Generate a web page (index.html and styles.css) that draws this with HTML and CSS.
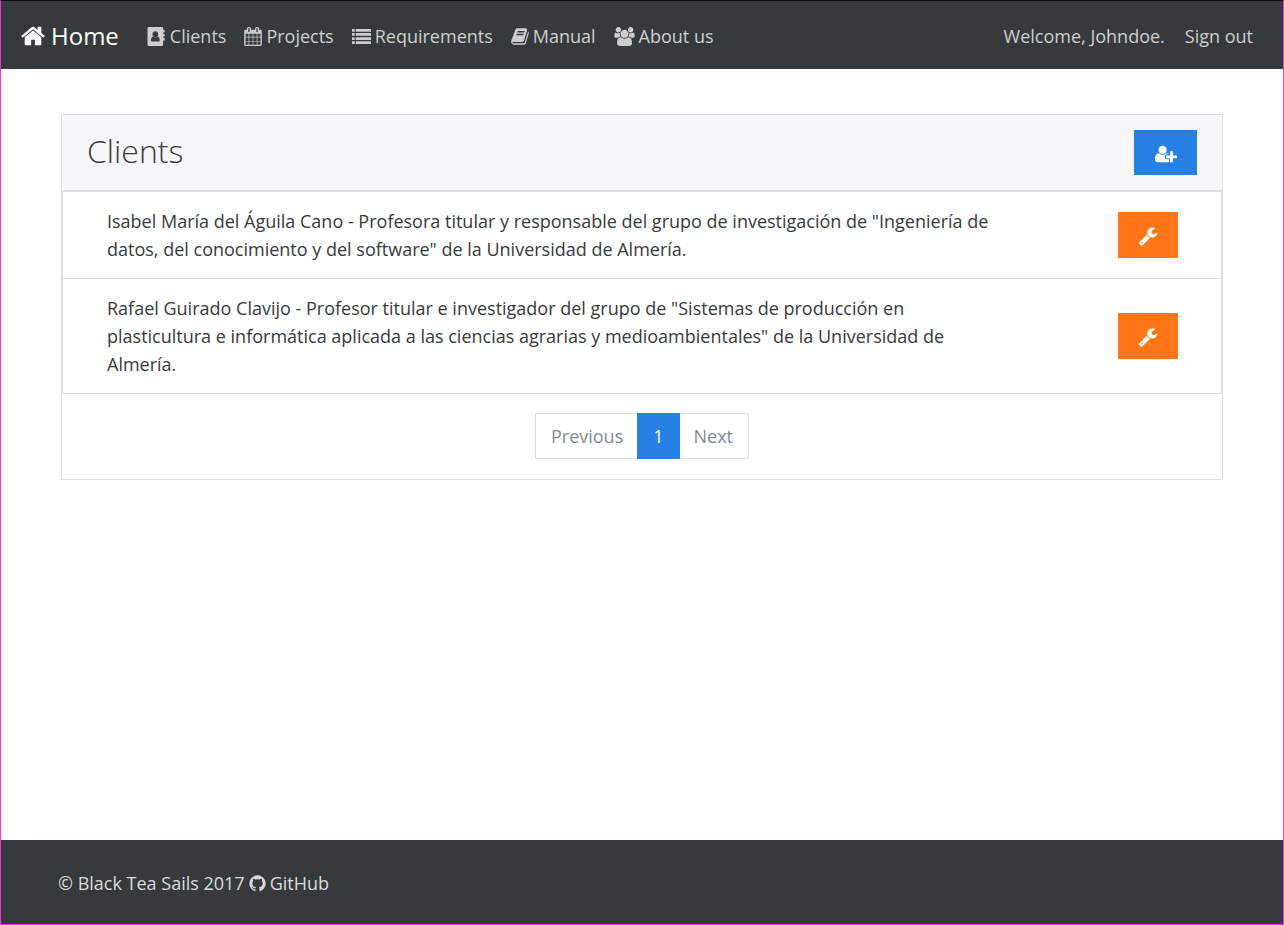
FILE: index.html
```html
<!DOCTYPE html>
<html lang="en">
<head>
<meta charset="utf-8">
<meta name="viewport" content="width=device-width, initial-scale=1">
<title>Clients</title>
<link rel="stylesheet" href="styles.css">
</head>
<body>
<header class="navbar">
  <a class="brand" href="#"><svg class="icon icon-home" viewBox="64 0 1664 1792" aria-hidden="true"><path d="M1472 992v480q0 26-19 45t-45 19h-384v-384h-256v384h-384q-26 0-45-19t-19-45v-480q0-1 .5-3t.5-3l575-474 575 474q1 2 1 6zm223-69l-62 74q-8 9-21 11h-3q-13 0-21-7l-692-577-692 577q-12 8-24 7-13-2-21-11l-62-74q-8-10-7-23.500t11-21.500l719-599q32-26 76-26t76 26l244 204v-195q0-14 9-23t23-9h192q14 0 23 9t9 23v408l219 182q10 8 11 21.500t-7 23.500z"/></svg>Home</a>
  <nav class="links">
    <a href="#"><svg class="icon" viewBox="0 0 1792 1792" aria-hidden="true"><path fill-rule="evenodd" d="M160 0h1250q110 0 110 110v146h80q64 0 64 64v128q0 64-64 64h-80v128h80q64 0 64 64v128q0 64-64 64h-80v128h80q64 0 64 64v128q0 64-64 64h-80v402q0 110-110 110H160Q50 1792 50 1682V110Q50 0 160 0zM785 400q-110 0-188 78t-78 200 78 202 188 80 188-80 78-202-78-200-188-78zM570 900q-110 20-155 130t-45 220q0 110 100 110h630q100 0 100-110 0-110-45-220t-155-130q-90 100-215 100T570 900z"/></svg>Clients</a>
    <a href="#"><svg class="icon icon-narrow" viewBox="64 0 1664 1792" aria-hidden="true"><path d="M192 1664h288v-288h-288v288zm352 0h320v-288h-320v288zm-352-352h288v-320h-288v320zm352 0h320v-320h-320v320zm-352-384h288v-288h-288v288zm736 736h320v-288h-320v288zm-384-736h320v-288h-320v288zm768 736h288v-288h-288v288zm-384-352h320v-320h-320v320zm-352-864v-288q0-13-9.500-22.500t-22.500-9.500h-64q-13 0-22.500 9.500t-9.500 22.500v288q0 13 9.500 22.500t22.500 9.500h64q13 0 22.500-9.500t9.500-22.500zm736 864h288v-320h-288v320zm-384-384h320v-288h-320v288zm384 0h288v-288h-288v288zm32-480v-288q0-13-9.500-22.500t-22.500-9.500h-64q-13 0-22.500 9.500t-9.500 22.500v288q0 13 9.500 22.500t22.500 9.500h64q13 0 22.500-9.500t9.500-22.500zm384-64v1280q0 52-38 90t-90 38h-1408q-52 0-90-38t-38-90v-1280q0-52 38-90t90-38h128v-96q0-66 47-113t113-47h64q66 0 113 47t47 113v96h384v-96q0-66 47-113t113-47h64q66 0 113 47t47 113v96h128q52 0 90 38t38 90z"/></svg>Projects</a>
    <a href="#"><svg class="icon" viewBox="0 0 1792 1792" aria-hidden="true"><path d="M0 192h256v256H0zM352 192h1440v256H352zM0 576h256v256H0zM352 576h1440v256H352zM0 960h256v256H0zM352 960h1440v256H352zM0 1344h256v256H0zM352 1344h1440v256H352z"/></svg>Requirements</a>
    <a href="#"><svg class="icon icon-narrow" viewBox="64 0 1664 1792" aria-hidden="true"><path d="M1703 478q40 57 18 129l-275 906q-19 64-76.500 107.500t-122.500 43.500h-923q-77 0-148.500-53.500t-99.500-131.500q-24-67-2-127 0-4 3-27t4-37q1-8-3-21.500t-3-19.500q2-11 8-21t16.500-23.500 16.500-23.500q23-38 45-91.500t30-91.500q3-10 .5-30t-.5-28q3-11 17-28t17-23q21-36 42-92t25-90q1-9-2.500-32t.5-28q4-13 22-30.500t22-22.500q19-26 42.500-84.500t27.500-96.500q1-8-3-25.500t-2-26.500q2-8 9-18t18-23 17-21q8-12 16.500-30.500t15-35 16-36 19.500-32 26.500-23.500 36-11.500 47.500 5.500l-1 3q38-9 51-9h761q74 0 114 56t18 130l-274 906q-36 119-71.500 153.500t-128.500 34.500h-869q-27 0-38 15-11 16-1 43 24 70 144 70h923q29 0 56-15.500t35-41.500l300-987q7-22 5-57 38 15 59 43zm-1064 2q-4 13 2 22.500t20 9.500h608q13 0 25.500-9.500t16.500-22.500l21-64q4-13-2-22.500t-20-9.500h-608q-13 0-25.500 9.500t-16.500 22.500zm-83 256q-4 13 2 22.500t20 9.500h608q13 0 25.500-9.500t16.500-22.500l21-64q4-13-2-22.500t-20-9.500h-608q-13 0-25.500 9.500t-16.500 22.500z"/></svg>Manual</a>
    <a href="#"><svg class="icon icon-wide" viewBox="0 0 1920 1792" aria-hidden="true"><path d="M593 896q-162 5-265 128h-134q-82 0-138-40.500t-56-118.500q0-353 124-353 6 0 43.500 21t97.500 42.500 119 21.500q67 0 133-23-5 37-5 66 0 139 81 256zm1071 637q0 120-73 189.500t-194 69.500h-874q-121 0-194-69.500t-73-189.500q0-53 3.500-103.500t14-109 26.500-108.500 43-97.500 62-81 85.500-53.500 111.500-20q10 0 43 21.500t73 48 107 48 135 21.500 135-21.500 107-48 73-48 43-21.500q61 0 111.500 20t85.500 53.500 62 81 43 97.500 26.500 108.500 14 109 3.500 103.500zm-1024-1277q0 106-75 181t-181 75-181-75-75-181 75-181 181-75 181 75 75 181zm704 384q0 159-112.500 271.500t-271.500 112.500-271.500-112.500-112.500-271.500 112.500-271.500 271.500-112.500 271.500 112.500 112.500 271.500zm576 225q0 78-56 118.500t-138 40.500h-134q-103-123-265-128 81-117 81-256 0-29-5-66 66 23 133 23 59 0 119-21.500t97.500-42.500 43.500-21q124 0 124 353zm-128-609q0 106-75 181t-181 75-181-75-75-181 75-181 181-75 181 75 75 181z"/></svg>About us</a>
  </nav>
  <div class="account"><a href="#">Welcome, Johndoe.</a><a href="#">Sign out</a></div>
</header>
<main class="content">
  <section class="card">
    <div class="card-header">
      <h1>Clients</h1>
      <button class="btn btn-add" type="button" aria-label="Add client"><svg class="icon-plus" viewBox="0 0 2048 1792" aria-hidden="true"><path d="M704 896q-159 0-271.500-112.500t-112.500-271.500 112.500-271.500 271.500-112.500 271.500 112.500 112.500 271.500-112.500 271.500-271.500 112.500zm960 128h352q13 0 22.500 9.500t9.500 22.500v192q0 13-9.500 22.500t-22.500 9.500h-352v352q0 13-9.500 22.500t-22.500 9.500h-192q-13 0-22.500-9.500t-9.500-22.500v-352h-352q-13 0-22.500-9.500t-9.500-22.500v-192q0-13 9.500-22.500t22.500-9.500h352v-352q0-13 9.500-22.500t22.500-9.500h192q13 0 22.500 9.500t9.500 22.500v352zm-736 224q0 52 38 90t90 38h256v238q-68 50-171 50h-874q-121 0-194-69t-73-190q0-53 3.500-103.500t14-109 26.500-108.500 43-97.500 62-81 85.500-53.500 111.500-20q19 0 39 17 79 61 154.500 91.500t164.500 30.500 164.500-30.500 154.500-91.500q20-17 39-17 132 0 217 96h-223q-52 0-90 38t-38 90v192z"/></svg></button>
    </div>
    <ul class="clients">
      <li>
        <p>Isabel María del Águila Cano - Profesora titular y responsable del grupo de investigación de "Ingeniería de datos, del conocimiento y del software" de la Universidad de Almería.</p>
        <button class="btn btn-edit" type="button" aria-label="Edit Isabel María del Águila Cano"><svg class="icon-wrench" viewBox="0 0 1792 1792" aria-hidden="true"><path d="M448 1472q0-26-19-45t-45-19-45 19-19 45 19 45 45 19 45-19 19-45zm644-420l-682 682q-37 37-90 37-52 0-91-37l-106-108q-38-36-38-90 0-53 38-91l681-681q39 98 114.500 173.500t173.500 114.500zm634-435q0 39-23 106-47 134-164.500 217.500t-258.500 83.500q-185 0-316.500-131.500t-131.500-316.500 131.500-316.500 316.500-131.500q58 0 121.500 16.500t107.500 46.500q16 11 16 28t-16 28l-293 169v224l193 107q5-3 79-48.500t135.500-81 70.500-35.500q15 0 23.500 10t8.500 25z"/></svg></button>
      </li>
      <li>
        <p>Rafael Guirado Clavijo - Profesor titular e investigador del grupo de "Sistemas de producción en plasticultura e informática aplicada a las ciencias agrarias y medioambientales" de la Universidad de Almería.</p>
        <button class="btn btn-edit" type="button" aria-label="Edit Rafael Guirado Clavijo"><svg class="icon-wrench" viewBox="0 0 1792 1792" aria-hidden="true"><path d="M448 1472q0-26-19-45t-45-19-45 19-19 45 19 45 45 19 45-19 19-45zm644-420l-682 682q-37 37-90 37-52 0-91-37l-106-108q-38-36-38-90 0-53 38-91l681-681q39 98 114.500 173.500t173.500 114.500zm634-435q0 39-23 106-47 134-164.500 217.500t-258.500 83.500q-185 0-316.500-131.500t-131.500-316.500 131.500-316.500 316.500-131.500q58 0 121.500 16.500t107.500 46.500q16 11 16 28t-16 28l-293 169v224l193 107q5-3 79-48.500t135.500-81 70.500-35.500q15 0 23.500 10t8.500 25z"/></svg></button>
      </li>
    </ul>
    <nav class="pagination" aria-label="Pages">
      <a href="#">Previous</a><a class="active" href="#" aria-current="page">1</a><a href="#">Next</a>
    </nav>
  </section>
</main>
<footer class="footer">
  <span>© Black Tea Sails 2017</span>
  <a href="#"><svg class="icon" viewBox="0 0 1792 1792" aria-hidden="true"><path d="M896 128q209 0 385.500 103t279.500 279.500 103 385.500q0 251-146.500 451.500t-378.500 277.500q-27 5-40-7t-13-30q0-3 .5-76.500t.5-134.500q0-97-52-142 57-6 102.500-18t94-39 81-66.500 53-105 20.500-150.500q0-119-79-206 37-91-8-204-28-9-81 11t-92 44l-38 24q-93-26-192-26t-192 26q-16-11-42.500-27t-83.500-38.500-85-13.500q-45 113-8 204-79 87-79 206 0 85 20.500 150t52.500 105 80.500 67 94 39 102.500 18q-39 36-49 103-21 10-45 15t-57 5-65.500-21.500-55.500-62.500q-19-32-48.500-52t-49.500-24l-20-3q-21 0-29 4.500t-5 11.500 9 14 13 12l7 5q22 10 43.500 38t31.500 51l10 23q13 38 44 61.500t67 30 69.500 7 55.500-3.500l23-4q0 38 .5 88.500t.5 54.500q0 18-13 30t-40 7q-232-77-378.500-277.500t-146.500-451.500q0-209 103-385.500t279.500-279.500 385.500-103z"/></svg>GitHub</a>
</footer>
</body>
</html>
```
FILE: styles.css
```css
* { box-sizing: border-box; }

body {
  margin: 0;
  min-height: 100vh;
  display: flex;
  flex-direction: column;
  border: 1px solid #e23be2;
  border-top-color: #0c0c0c;
  background: #fff;
  color: #373a3c;
  font: 18px/28px "Open Sans", "Noto Sans", sans-serif;
}

a { color: inherit; text-decoration: none; }

svg { fill: currentColor; flex: none; }

.icon { width: 19px; height: 19px; }
.icon-narrow { width: 18px; }
.icon-wide { width: 21px; }
.icon-home { width: 24px; height: 26px; }
.icon-plus { width: 22px; height: 20px; }
.icon-wrench { width: 20px; height: 20px; }

.navbar {
  display: flex;
  align-items: center;
  padding: 21px 30px 19px 20px;
  background: #373a3c;
  color: #cdcece;
}

.brand {
  display: flex;
  align-items: center;
  gap: 6px;
  margin-right: 28px;
  color: #fff;
  font-size: 24px;
}

.links { display: flex; gap: 18px; }
.links a { display: flex; align-items: center; gap: 4px; }
.account { display: flex; gap: 20px; margin-left: auto; }

.content { flex: 1; padding: 45px 60px; }

.card { border: 1px solid #dfdfdf; }

.card-header {
  display: flex;
  justify-content: space-between;
  padding: 15px 25px;
  border-bottom: 1px solid #dfdfdf;
  background: #f7f7f9;
}

h1 {
  margin: 0;
  font-size: 32px;
  font-weight: 300;
  line-height: 42px;
}

.btn {
  display: flex;
  align-items: center;
  justify-content: center;
  flex: none;
  height: 46px;
  padding: 2px 0 0;
  border: 0;
  color: #fff;
}

.btn-add { width: 63px; height: 45px; background: #2780e3; }
.btn-edit { width: 60px; background: #ff7518; }

.clients {
  margin: 0;
  padding: 0;
  list-style: none;
  border: 1px solid #dfdfdf;
}

.clients li {
  display: flex;
  align-items: center;
  justify-content: space-between;
  padding: 15px 43px 15px 44px;
}

.clients li + li { border-top: 1px solid #dfdfdf; }

.clients p { margin: 0; max-width: 886px; }

.pagination {
  display: flex;
  justify-content: center;
  padding: 19px 0 20px;
}

.pagination a {
  padding: 8px 15px;
  border: 1px solid #dfdfdf;
  line-height: 28px;
  color: #818a91;
}

.pagination a:first-child { border-right: 0; padding-right: 14px; }
.pagination a:last-child { border-left: 0; padding-left: 14px; }

.pagination .active {
  border-color: #2780e3;
  background: #2780e3;
  color: #fff;
}

.footer {
  display: flex;
  gap: 3px;
  padding: 29px 57px 27px;
  background: #373a3c;
  color: #dadbdb;
}

.footer a { display: flex; align-items: center; gap: 3px; }
```
